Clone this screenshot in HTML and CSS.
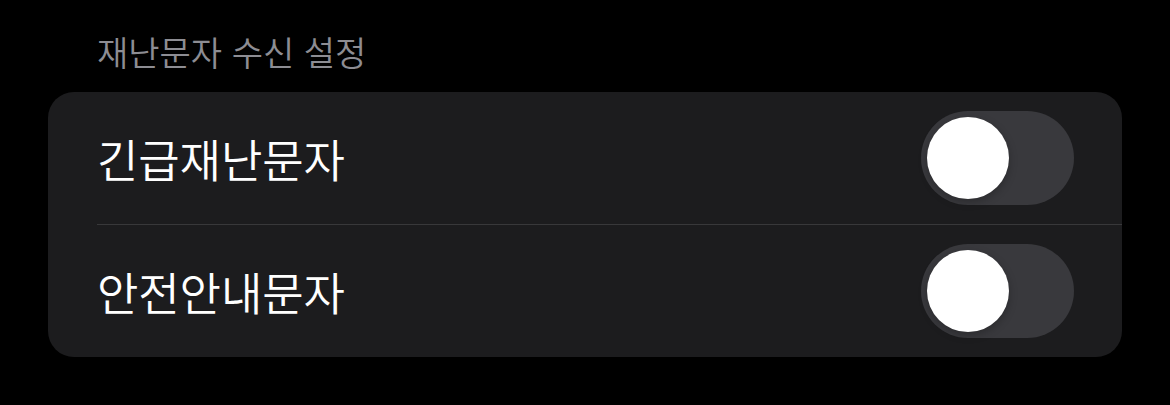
FILE: index.html
```html
<!DOCTYPE html>
<html lang="ko">
<head>
<meta charset="utf-8">
<link rel="stylesheet" href="styles.css">
</head>
<body>
<div class="page">
  <div class="section-title">재난문자 수신 설정</div>
  <div class="card">
    <div class="row">
      <span class="label">긴급재난문자</span>
      <span class="toggle"><span class="knob"></span></span>
    </div>
    <div class="sep"></div>
    <div class="row">
      <span class="label">안전안내문자</span>
      <span class="toggle"><span class="knob"></span></span>
    </div>
  </div>
</div>
</body>
</html>
```
FILE: styles.css
```css
html, body {
  margin: 0;
  padding: 0;
  background: #000;
}
body {
  width: 1170px;
  height: 405px;
  overflow: hidden;
  font-family: "Noto Sans CJK KR", "Noto Sans", sans-serif;
}
.page {
  padding: 30px 48px 0 48px;
}
.section-title {
  color: #8d8d93;
  font-size: 34px;
  font-weight: 350;
  line-height: 44px;
  padding-left: 49px;
  letter-spacing: 0;
  margin-bottom: 18px;
}
.card {
  background: #1c1c1e;
  border-radius: 26px;
  width: 1074px;
}
.row {
  height: 132px;
  display: flex;
  align-items: center;
  justify-content: space-between;
  padding: 0 48px 0 49px;
}
.label {
  color: #fff;
  font-size: 45px;
  font-weight: 350;
  letter-spacing: -0.1px;
  line-height: 56px;
  padding-top: 2px;
}
.sep {
  height: 1px;
  background: #38383a;
  margin-left: 49px;
}
.toggle {
  width: 153px;
  height: 94px;
  border-radius: 47px;
  background: #39393d;
  display: flex;
  align-items: center;
  padding-left: 6px;
  box-sizing: border-box;
}
.knob {
  width: 82px;
  height: 82px;
  border-radius: 50%;
  background: #fff;
  box-shadow: 0 3px 8px rgba(0,0,0,0.25);
}
```
